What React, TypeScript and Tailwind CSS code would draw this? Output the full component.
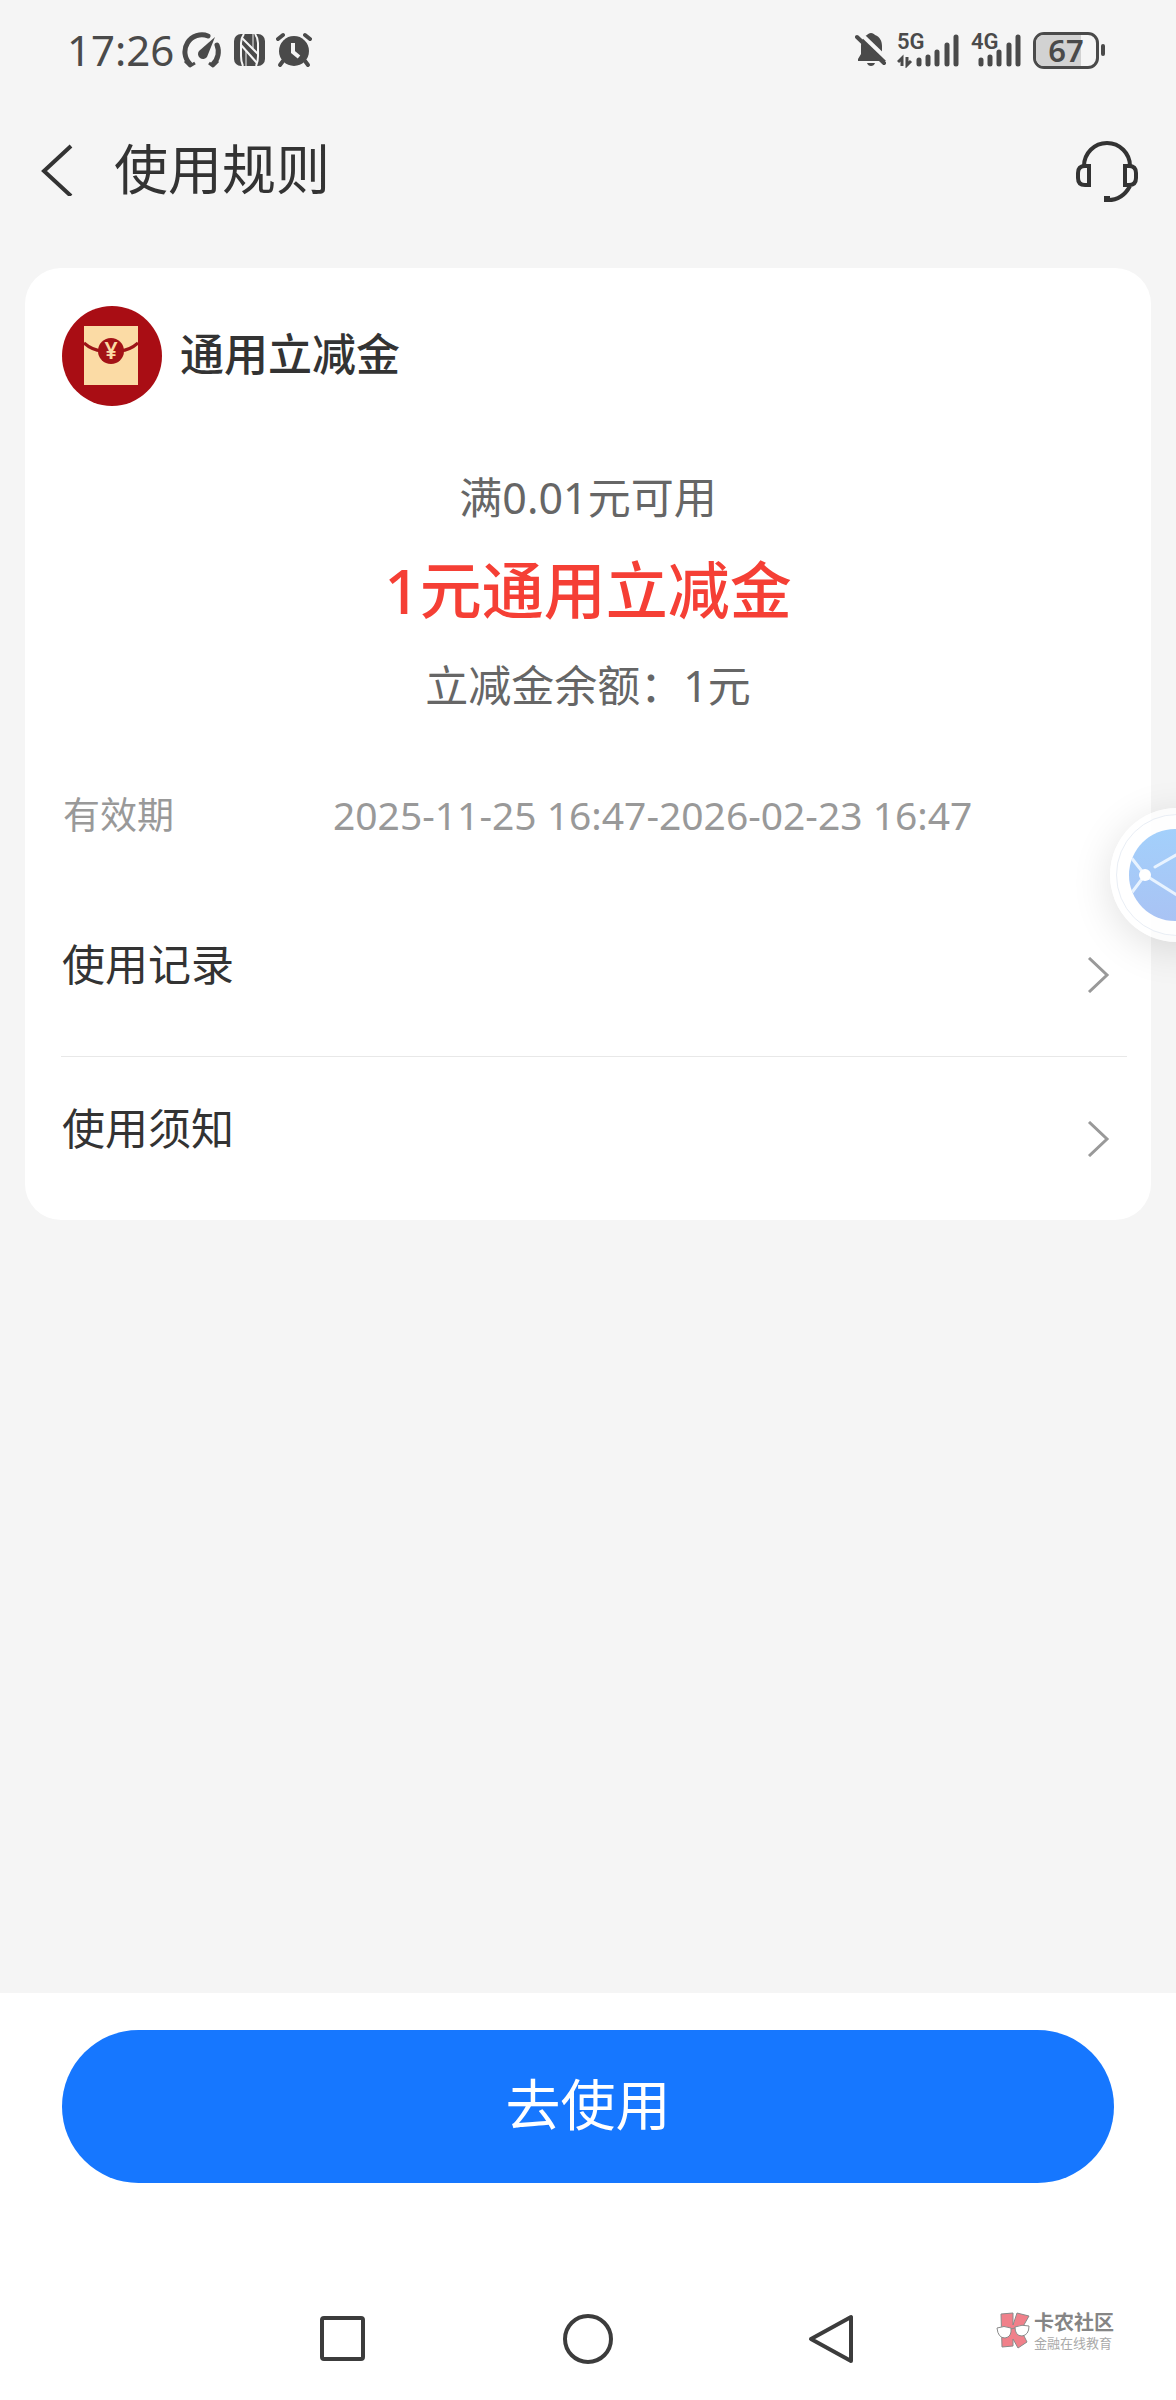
const rows = ['使用记录', '使用须知'];

function StatusBar() {
  return (
    <div className="flex h-[100px] items-center justify-between pl-[67px] pr-[71px] text-[#4a4a4a]">
      <div className="flex items-center">
        <span className="text-[42px] leading-[60px]">17:26</span>
        <svg className="ml-2 h-9 w-10" viewBox="0 0 40 36" fill="none" stroke="currentColor">
          <path d="M8 32 A17 17 0 0 1 26 4" strokeWidth="5" strokeLinecap="round" />
          <path d="M35 13 A17 17 0 0 1 31 32" strokeWidth="5" strokeLinecap="round" />
          <path d="M3 29 L8 34 L13 31 M27 31 L31 34 L36 29" strokeWidth="3" strokeLinejoin="round" />
          <path d="M33 5 L25 25 A5 5 0 1 1 17 19 Z" fill="currentColor" stroke="none" />
        </svg>
        <svg className="ml-3 h-8 w-8" viewBox="0 0 32 32">
          <rect x="0" y="0" width="31" height="32" rx="7" fill="currentColor" />
          <path d="M9 32 Q7 28 7 22 V9 Q7 4 10 0" fill="none" stroke="#f5f5f5" strokeWidth="2" />
          <path d="M21 0 Q24 4 24 9 V22 Q24 28 22 32" fill="none" stroke="#f5f5f5" strokeWidth="2" />
          <path d="M8 4 L24 20 M7 11 L23 29" stroke="#f5f5f5" strokeWidth="2" />
          <path d="M12 32 V17 M19 14 V0" stroke="#f5f5f5" strokeWidth="1" />
        </svg>
        <svg className="ml-2.5 h-9 w-9" viewBox="0 0 36 36" fill="none" stroke="currentColor" strokeLinecap="round">
          <circle cx="18" cy="19" r="15" fill="currentColor" stroke="none" />
          <path d="M2 7 L7 3 M34 7 L29 3" strokeWidth="4" />
          <path d="M7 29 L4 33 M29 29 L32 33" strokeWidth="4" />
          <path d="M17 11 V20 L23 25" stroke="#f5f5f5" strokeWidth="4" strokeLinecap="butt" />
        </svg>
      </div>
      <div className="flex items-center">
        <svg className="h-9 w-8" viewBox="0 0 32 36">
          <path
            d="M16 1 C18 1 19 2 20 3 C25 5 27 9 27 14 V22 L31 29 H3 V27 L6 22 V14 C6 9 8 5 12 3 C13 2 14 1 16 1 Z"
            fill="currentColor"
          />
          <path d="M12 31 H20 Q19 34 16 34 Q13 34 12 31 Z" fill="currentColor" />
          <path d="M6 2 L32 27" stroke="#f5f5f5" strokeWidth="4" />
          <path d="M2 5 L29 31" stroke="currentColor" strokeWidth="4" strokeLinecap="round" />
        </svg>
        <div className="relative ml-2.5">
          <svg className="h-9 w-[62px]" viewBox="0 0 62 36" fill="none" stroke="currentColor" strokeLinecap="round">
            <path d="M22 28 V32 M31 25 V32 M40 20 V32 M50 13 V32 M59 5 V32" strokeWidth="5" />
            <path d="M5 34 V26 L1 30 M10 25 V33 L14 29" strokeWidth="3" strokeLinecap="butt" />
          </svg>
          <NetworkLabel text="5G" />
        </div>
        <div className="relative ml-3">
          <svg className="h-9 w-[50px]" viewBox="0 0 50 36" fill="none" stroke="currentColor" strokeLinecap="round">
            <path d="M10 28 V32 M19 25 V32 M28 20 V32 M38 13 V32 M47 5 V32" strokeWidth="5" />
          </svg>
          <NetworkLabel text="4G" />
        </div>
        <div className="ml-3 flex items-center gap-0.5">
          <div className="relative h-[37px] w-[66px] rounded-[11px] border-3 border-[#4a4a4a]">
            <div className="h-full w-3/4 rounded-l-lg bg-[#d2d2d2]" />
            <span className="absolute inset-x-0 -top-1 text-center text-[31px] leading-[38px] font-semibold">67</span>
          </div>
          <div className="h-3 w-1 rounded-sm bg-[#4a4a4a]" />
        </div>
      </div>
    </div>
  );
}

function NetworkLabel({ text }: { text: string }) {
  return (
    <span className="absolute -top-0.5 left-0 font-['Liberation_Sans_Narrow',Roboto,sans-serif] text-[22px] leading-6 font-semibold">
      {text}
    </span>
  );
}

function Header() {
  return (
    <header className="flex h-[140px] items-center pr-[34px] pl-10 text-[#333]">
      <button aria-label="返回">
        <svg className="h-[52px] w-9" viewBox="0 0 36 52" fill="none" stroke="currentColor" strokeWidth="4">
          <path d="M31 2 L4 27 L31 52" />
        </svg>
      </button>
      <h1 className="ml-[38px] pb-0.5 text-[54px] leading-[72px]">使用规则</h1>
      <button aria-label="客服" className="ml-auto">
        <svg className="h-[66px] w-[70px]" viewBox="0 0 70 66" fill="none" stroke="currentColor" strokeWidth="4">
          <path d="M12 29 A23 23 0 0 1 58 29" />
          <path d="M17 29 V48 H13 Q6 48 6 41 V36 Q6 29 13 29 Z" />
          <path d="M53 29 V48 H57 Q64 48 64 41 V36 Q64 29 57 29 Z" />
          <path d="M58 49 Q50 64 34 63" />
          <path d="M32 62 H38" strokeWidth="6" />
        </svg>
      </button>
    </header>
  );
}

function EnvelopeIcon() {
  return (
    <svg className="h-[100px] w-[100px]" viewBox="0 0 100 100">
      <circle cx="50" cy="50" r="50" fill="#a90d14" />
      <rect x="22" y="20" width="54" height="59" fill="#fbdba5" />
      <path d="M22 37 Q30 44 40 45 M76 37 Q68 44 58 45" fill="none" stroke="#9d1417" strokeWidth="3" />
      <circle cx="49" cy="45" r="13" fill="#a31216" />
      <text x="49" y="53" textAnchor="middle" fontSize="23" fontWeight="600" fill="#fbdba5">
        ¥
      </text>
    </svg>
  );
}

function FloatingBall() {
  return (
    <button
      aria-label="悬浮球"
      className="absolute top-[808px] -right-[68px] flex h-[134px] w-[134px] items-center justify-center rounded-full bg-white/70 shadow-[0_8px_40px_rgba(0,0,0,0.12)]"
    >
      <span className="flex h-[122px] w-[122px] items-center justify-center rounded-full border border-[#e9eef5] bg-white/60">
        <svg className="h-24 w-24" viewBox="0 0 96 96" fill="none">
          <defs>
            <linearGradient id="ball" x1="0" y1="0" x2="0" y2="1">
              <stop offset="0" stopColor="#a3d0fb" />
              <stop offset="1" stopColor="#a9c3f4" />
            </linearGradient>
            <clipPath id="ballClip">
              <circle cx="46" cy="48" r="46" />
            </clipPath>
          </defs>
          <circle cx="46" cy="48" r="46" fill="url(#ball)" />
          <g clipPath="url(#ballClip)" stroke="#e8f3ff" strokeWidth="3">
            <path d="M1 29 L16 48 L1 68" />
            <path d="M16 48 L59 75" />
            <path d="M26 40 L59 21" strokeLinecap="round" />
          </g>
          <circle cx="16" cy="48" r="6" fill="#fff" />
        </svg>
      </span>
    </button>
  );
}

function Watermark() {
  return (
    <div className="absolute top-[33px] right-[62px] flex items-center gap-1">
      <svg className="h-10 w-[34px]" viewBox="0 0 34 40" stroke="#8a8a8a" strokeWidth="1">
        <path d="M5 3 L17 2 L17 14 L21 2 L33 5 L25 19 L31 31 L22 37 L17 28 L17 35 L6 36 Z" fill="#f0808a" />
        <path d="M1 17 Q8 14 15 17 Q16 26 9 27 Q2 27 1 17 Z M19 16 Q26 13 33 15 Q33 24 26 25 Q19 25 19 16 Z" fill="#fff" />
        <path d="M15 18 L19 17" />
      </svg>
      <div className="flex flex-col">
        <span className="text-[20px] leading-6 font-bold text-[#858585]">卡农社区</span>
        <span className="text-[13px] leading-4 text-[#aaa]">金融在线教育</span>
      </div>
    </div>
  );
}

export default function App() {
  return (
    <div className="relative flex min-h-screen flex-col overflow-hidden bg-[#f5f5f5] font-['Noto_Sans','Noto_Sans_CJK_SC',sans-serif]">
      <StatusBar />
      <Header />

      <main className="mx-[25px] mt-7 rounded-[36px] bg-white pt-[38px] text-[#333]">
        <div className="flex items-center gap-[18px] pr-9 pl-[37px]">
          <EnvelopeIcon />
          <h2 className="pb-1 text-[44px] leading-[60px] font-medium">通用立减金</h2>
        </div>

        <div className="mt-[62px] flex flex-col items-center text-[43px] leading-[60px] text-[#666]">
          <p>满0.01元可用</p>
          <p className="mt-5 mb-6 text-[62px] leading-[84px] font-medium text-[#f53f35]">1元通用立减金</p>
          <p>立减金余额：1元</p>
        </div>

        <dl className="mt-[74px] flex px-[38px] text-[37px] leading-[50px] text-[#999]">
          <dt className="w-[270px]">有效期</dt>
          <dd className="text-[39px]">2025-11-25 16:47-2026-02-23 16:47</dd>
        </dl>

        <ul className="mt-[53px] mr-6 ml-9 divide-y divide-[#e8e8e8]">
          {rows.map(row => (
            <li key={row}>
              <button className="flex h-[163px] w-full items-center justify-between pr-4 pl-px">
                <span className="pb-5 text-[43px] leading-[60px]">{row}</span>
                <svg className="h-9 w-6" viewBox="0 0 24 36" fill="none" stroke="#999" strokeWidth="3">
                  <path d="M2 1 L20 18 L2 35" />
                </svg>
              </button>
            </li>
          ))}
        </ul>
      </main>

      <FloatingBall />

      <footer className="mt-auto bg-white pt-[37px]">
        <div className="px-[62px]">
          <button className="h-[153px] w-full rounded-full bg-[#1677ff] pb-1 text-[55px] text-white">去使用</button>
        </div>
        <nav className="relative mt-[95px] flex h-[122px] items-center justify-center gap-[195px] text-[#3c3c3c]">
          <button aria-label="最近任务">
            <svg className="h-[50px] w-[50px]" viewBox="0 0 50 50" fill="none" stroke="currentColor" strokeWidth="4">
              <rect x="4" y="4" width="41" height="41" rx="2" />
            </svg>
          </button>
          <button aria-label="主屏幕">
            <svg className="h-[50px] w-[50px]" viewBox="0 0 50 50" fill="none" stroke="currentColor" strokeWidth="4">
              <circle cx="25" cy="25" r="23" />
            </svg>
          </button>
          <button aria-label="返回上级">
            <svg className="h-[50px] w-[50px]" viewBox="0 0 50 50" fill="none" stroke="currentColor" strokeWidth="4">
              <path d="M3 25 L43 3 V47 Z" strokeLinejoin="round" />
            </svg>
          </button>
          <Watermark />
        </nav>
      </footer>
    </div>
  );
}
